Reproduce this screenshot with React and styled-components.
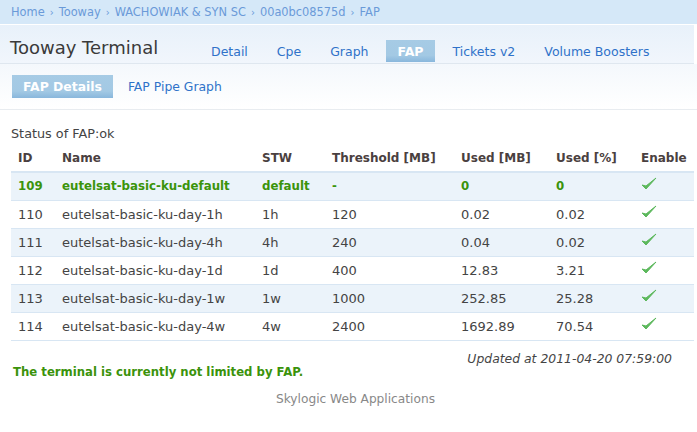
import styled, { createGlobalStyle } from "styled-components"

const rows = [
  { id: 109, name: "eutelsat-basic-ku-default", stw: "default", th: "-", mb: "0", pc: "0", def: true },
  { id: 110, name: "eutelsat-basic-ku-day-1h", stw: "1h", th: "120", mb: "0.02", pc: "0.02" },
  { id: 111, name: "eutelsat-basic-ku-day-4h", stw: "4h", th: "240", mb: "0.04", pc: "0.02" },
  { id: 112, name: "eutelsat-basic-ku-day-1d", stw: "1d", th: "400", mb: "12.83", pc: "3.21" },
  { id: 113, name: "eutelsat-basic-ku-day-1w", stw: "1w", th: "1000", mb: "252.85", pc: "25.28" },
  { id: 114, name: "eutelsat-basic-ku-day-4w", stw: "4w", th: "2400", mb: "1692.89", pc: "70.54" },
]

const tabs = ["Detail", "Cpe", "Graph", "FAP", "Tickets v2", "Volume Boosters"]

function Check() {
  return (
    <svg width="16" height="14" viewBox="0 0 16 14">
      <path d="M1 8 L5 12 L15 1 L5 9 Z" fill="#5cb85c" stroke="#5cb85c" strokeWidth="1" strokeLinejoin="round" />
    </svg>
  )
}

function App() {
  return (
    <Page>
      <GlobalStyle />
      <Breadcrumb>
        {["Home", "Tooway", "WACHOWIAK & SYN SC", "00a0bc08575d", "FAP"].map((c, i) => (
          <Crumb key={c}>{i > 0 && <Sep>›</Sep>}{c}</Crumb>
        ))}
      </Breadcrumb>
      <Header>
        <Title>Tooway Terminal</Title>
        <Tabs>
          {tabs.map(t => <Tab key={t} $active={t === "FAP"}>{t}</Tab>)}
        </Tabs>
      </Header>
      <SubNav>
        <Tab $active $sub>FAP Details</Tab>
        <Tab $sub>FAP Pipe Graph</Tab>
      </SubNav>
      <Content>
        <Status>Status of FAP:ok</Status>
        <Table>
          <colgroup>
            <col style={{ width: 44 }} />
            <col style={{ width: 200 }} />
            <col style={{ width: 70 }} />
            <col style={{ width: 129 }} />
            <col style={{ width: 95 }} />
            <col style={{ width: 85 }} />
            <col style={{ width: 60 }} />
          </colgroup>
          <thead>
            <tr>
              <Th>ID</Th>
              <Th>Name</Th>
              <Th>STW</Th>
              <Th>Threshold [MB]</Th>
              <Th>Used [MB]</Th>
              <Th>Used [%]</Th>
              <Th>Enable</Th>
            </tr>
          </thead>
          <tbody>
            {rows.map((r, i) => (
              <Row key={r.id} $odd={i % 2 === 0}>
                <Td $def={r.def}>{r.id}</Td>
                <Td $def={r.def}>{r.name}</Td>
                <Td $def={r.def}>{r.stw}</Td>
                <Td $def={r.def}>{r.th}</Td>
                <Td $def={r.def}>{r.mb}</Td>
                <Td $def={r.def}>{r.pc}</Td>
                <Td><Check /></Td>
              </Row>
            ))}
          </tbody>
        </Table>
        <Bottom>
          <Limited>The terminal is currently not limited by FAP.</Limited>
          <Updated>Updated at 2011-04-20 07:59:00</Updated>
        </Bottom>
      </Content>
      <Footer>Skylogic Web Applications</Footer>
    </Page>
  )
}

const GlobalStyle = createGlobalStyle`
  body {
    margin: 0;
    background: #fff;
    font-family: "DejaVu Sans", Verdana, sans-serif;
  }
`

const Page = styled.div`
  width: 697px;
  height: 432px;
  overflow: hidden;
`

const Breadcrumb = styled.div`
  height: 24px;
  background: #d5e8f8;
  border-bottom: 1px solid #fff;
  display: flex;
  align-items: center;
  padding-left: 11px;
  font-size: 11.4px;
  color: #6a9ad8;
`

const Crumb = styled.span`
  white-space: pre;
`

const Sep = styled.span`
  margin: 0 5px;
  font-size: 10px;
`

const Header = styled.div`
  height: 38px;
  margin-right: 3px;
  background: linear-gradient(#e8f1fa, #f1f6fc);
  border-bottom: 1px solid #dfe7ef;
  display: flex;
  align-items: flex-end;
  padding-left: 10px;
`

const Title = styled.h1`
  margin: 0 0 5px 0;
  font-size: 18px;
  font-weight: normal;
  color: #3a3a3a;
  width: 189px;
`

const Tabs = styled.div`
  display: flex;
  align-items: center;
  height: 22px;
  margin-bottom: 1px;
`

const Tab = styled.span`
  display: inline-flex;
  align-items: center;
  height: ${p => (p.$sub ? 23 : 22)}px;
  padding: 0 ${p => (p.$sub ? 11 : 12)}px;
  margin-right: ${p => (p.$sub ? 4 : 5)}px;
  font-size: ${p => (p.$sub ? 12.4 : 12.5)}px;
  color: ${p => (p.$active ? "#fff" : "#2f72c9")};
  font-weight: ${p => (p.$active ? "bold" : "normal")};
  background: ${p => (p.$active ? "linear-gradient(#a6cbe5, #a3c9e4 70%, #89b7dc)" : "none")};
`

const SubNav = styled.div`
  height: 46px;
  background: linear-gradient(#f4f8fc, #fff);
  border-bottom: 1px solid #e8ecf0;
  display: flex;
  align-items: center;
  padding-left: 12px;
  padding-bottom: 1px;
  box-sizing: border-box;
`

const Content = styled.div`
  padding: 16px 3px 0 11px;
`

const Status = styled.div`
  font-size: 12.8px;
  color: #444;
  margin-bottom: 10px;
`

const Table = styled.table`
  width: 683px;
  table-layout: fixed;
  border-collapse: collapse;
  font-size: 13px;
  color: #444;
`

const Th = styled.th`
  text-align: left;
  font-weight: bold;
  font-size: 12px;
  color: #4a4040;
  padding: 0 0 6px 7px;
  white-space: nowrap;
  border-bottom: 2px solid #d8e6f3;
`

const Row = styled.tr`
  background: ${p => (p.$odd ? "#ebf3fa" : "#fff")};
  border-bottom: 1px solid #d8e6f3;
  height: 28px;
`

const Td = styled.td`
  padding: 0 0 0 7px;
  color: ${p => (p.$def ? "#3b930b" : "#444")};
  font-weight: ${p => (p.$def ? "bold" : "normal")};
  font-size: ${p => (p.$def ? "11.8px" : "13px")};
  svg {
    display: block;
    margin-top: -5px;
  }
`

const Bottom = styled.div`
  display: flex;
  justify-content: space-between;
  margin-top: 10px;
  padding-right: 22px;
`

const Limited = styled.div`
  margin-top: 14px;
  margin-left: 2px;
  font-size: 11.7px;
  font-weight: bold;
  color: #3b930b;
`

const Updated = styled.div`
  font-size: 12.4px;
  font-style: italic;
  color: #444;
`

const Footer = styled.div`
  text-align: center;
  margin-top: 13px;
  padding-left: 14px;
  font-size: 12.2px;
  color: #888;
`

export default App
